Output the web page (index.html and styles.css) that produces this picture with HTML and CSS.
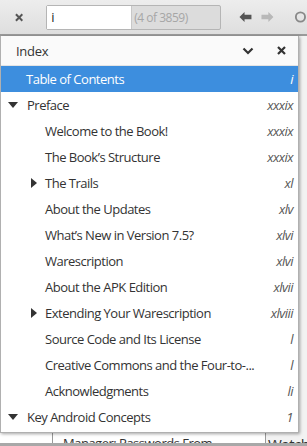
FILE: index.html
```html
<!DOCTYPE html>
<html lang="en">
<head>
  <meta charset="utf-8">
  <title>Index</title>
  <link rel="stylesheet" href="styles.css">
</head>
<body>
  <div class="toolbar">
    <svg class="tool-close" width="9" height="9" viewBox="0 0 9 9"><path d="M1 1 L8 8 M8 1 L1 8" stroke="#555" stroke-width="2.2"/></svg>
    <div class="search">
      <div class="search-input">i</div>
      <div class="search-count">(4 of 3859)</div>
    </div>
    <svg class="nav-arrow" width="14" height="12" viewBox="0 0 14 12"><path d="M0.5 6 L6 0.5 L6 3.5 L13.5 3.5 L13.5 8.5 L6 8.5 L6 11.5 Z" fill="#555"/></svg>
    <svg class="nav-arrow" width="14" height="12" viewBox="0 0 14 12"><path d="M13.5 6 L8 0.5 L8 3.5 L0.5 3.5 L0.5 8.5 L8 8.5 L8 11.5 Z" fill="#b8b8b8"/></svg>
    <svg class="search-icon" width="14" height="14" viewBox="0 0 14 14"><circle cx="7" cy="7" r="5" fill="none" stroke="#888" stroke-width="2"/></svg>
  </div>

  <div class="doc">
    <div class="doc-margin"></div>
    <div class="doc-page">
      <p class="doc-line">Manager: Passwords From</p>
    </div>
    <div class="doc-side">
      <p class="doc-line">Watch</p>
    </div>
  </div>

  <!-- index panel over the document -->
  <div class="panel">
    <div class="panel-head">
      <span class="panel-title">Index</span>
      <svg class="head-icon" width="12" height="8" viewBox="0 0 12 8"><path d="M1.5 1.5 L6 6 L10.5 1.5" fill="none" stroke="#333" stroke-width="2.2"/></svg>
      <svg class="head-close" width="9" height="9" viewBox="0 0 9 9"><path d="M1 1 L8 8 M8 1 L1 8" stroke="#333" stroke-width="2.2"/></svg>
    </div>
    <ul class="toc">
      <li class="row selected"><span class="label lvl0">Table of Contents</span><span class="page">i</span></li>
      <li class="row"><span class="tri open"></span><span class="label">Preface</span><span class="page">xxxix</span></li>
      <li class="row"><span class="label lvl1">Welcome to the Book!</span><span class="page">xxxix</span></li>
      <li class="row"><span class="label lvl1">The Book’s Structure</span><span class="page">xxxix</span></li>
      <li class="row"><span class="tri closed"></span><span class="label">The Trails</span><span class="page">xl</span></li>
      <li class="row"><span class="label lvl1">About the Updates</span><span class="page">xlv</span></li>
      <li class="row"><span class="label lvl1">What’s New in Version 7.5?</span><span class="page">xlvi</span></li>
      <li class="row"><span class="label lvl1">Warescription</span><span class="page">xlvi</span></li>
      <li class="row"><span class="label lvl1">About the APK Edition</span><span class="page">xlvii</span></li>
      <li class="row"><span class="tri closed"></span><span class="label">Extending Your Warescription</span><span class="page">xlviii</span></li>
      <li class="row"><span class="label lvl1">Source Code and Its License</span><span class="page">l</span></li>
      <li class="row"><span class="label lvl1">Creative Commons and the Four-to-...</span><span class="page">l</span></li>
      <li class="row"><span class="label lvl1">Acknowledgments</span><span class="page">li</span></li>
      <li class="row"><span class="tri open"></span><span class="label">Key Android Concepts</span><span class="page">1</span></li>
    </ul>
  </div>
</body>
</html>
```

FILE: styles.css
```css
body {
  margin: 0;
  width: 307px;
  height: 446px;
  overflow: hidden;
  font-family: "Open Sans", "Liberation Sans", sans-serif;
  color: #333;
  background: #e6e6e6;
  position: relative;
}

.toolbar {
  height: 34px;
  display: flex;
  align-items: center;
  background: linear-gradient(#ededed, #dedede);
  border-bottom: 2px solid #9a9a9a;
}

.tool-close {
  margin: 0 23px 0 15px;
}

.search {
  display: flex;
  height: 23px;
  border: 1px solid #b5b5b5;
  border-radius: 2px;
  background: #dcdcdc;
}

.search-input {
  width: 80px;
  background: #fff;
  border-right: 1px solid #c8c8c8;
  font-size: 13px;
  line-height: 23px;
  padding-left: 4px;
  color: #222;
}

.search-count {
  width: 86px;
  font-size: 12px;
  letter-spacing: -0.5px;
  line-height: 23px;
  padding-left: 2px;
  color: #a6a6a6;
}

.nav-arrow {
  margin-left: 18px;
}

.nav-arrow + .nav-arrow {
  margin-left: 9px;
}

.search-icon {
  margin-left: 20px;
}

.doc {
  display: flex;
  height: 407px;
  background: #fff;
  border-bottom: 3px solid #a8a8a8;
}

.doc-margin {
  width: 52px;
  border-right: 1px solid #999;
}

.doc-page {
  width: 212px;
  border-right: 1px solid #999;
  display: flex;
  align-items: flex-end;
  overflow: hidden;
}

.doc-side {
  flex: 1;
  display: flex;
  align-items: flex-end;
  background: #f2f2f2;
  overflow: hidden;
}

.doc-line {
  margin: 0 0 -9px 10px;
  font-size: 13px;
  letter-spacing: -0.5px;
  line-height: 18px;
  white-space: nowrap;
  color: #333;
}

.doc-side .doc-line {
  margin-left: 2px;
  margin-bottom: -10px;
  font-size: 15px;
}

.panel {
  position: absolute;
  top: 36px;
  left: 0;
  width: 297px;
  height: 396px;
  background: #fff;
  border: 1px solid #b0b0b0;
  border-top: none;
  box-shadow: 1px 1px 3px rgba(0, 0, 0, 0.35);
}

.panel-head {
  height: 29px;
  display: flex;
  align-items: center;
  border-bottom: 1px solid #e4e4e4;
  background: #fafafa;
}

.panel-title {
  flex: 1;
  padding-left: 15px;
  font-size: 13px;
  letter-spacing: -0.3px;
  color: #333;
}

.head-icon {
  margin-right: 23px;
}

.head-close {
  margin-right: 12px;
}

.toc {
  list-style: none;
  margin: 0;
  padding: 0;
}

.row {
  height: 26px;
  display: flex;
  align-items: center;
  font-size: 13px;
  letter-spacing: -0.5px;
  padding-right: 5px;
}

.row.selected {
  background: #3d8ede;
  color: #fff;
}

.label {
  flex: 1;
  white-space: nowrap;
}

.lvl0 {
  padding-left: 25px;
}

.lvl1 {
  padding-left: 44px;
}

.page {
  font-style: italic;
  color: #555;
}

.selected .page {
  color: #fff;
}

.tri {
  width: 0;
  height: 0;
}

.tri.open {
  margin: 0 9px 0 7px;
  border-left: 5px solid transparent;
  border-right: 5px solid transparent;
  border-top: 6px solid #333;
}

.tri.closed {
  margin: 0 8px 0 30px;
  border-top: 5px solid transparent;
  border-bottom: 5px solid transparent;
  border-left: 6px solid #333;
}
```
